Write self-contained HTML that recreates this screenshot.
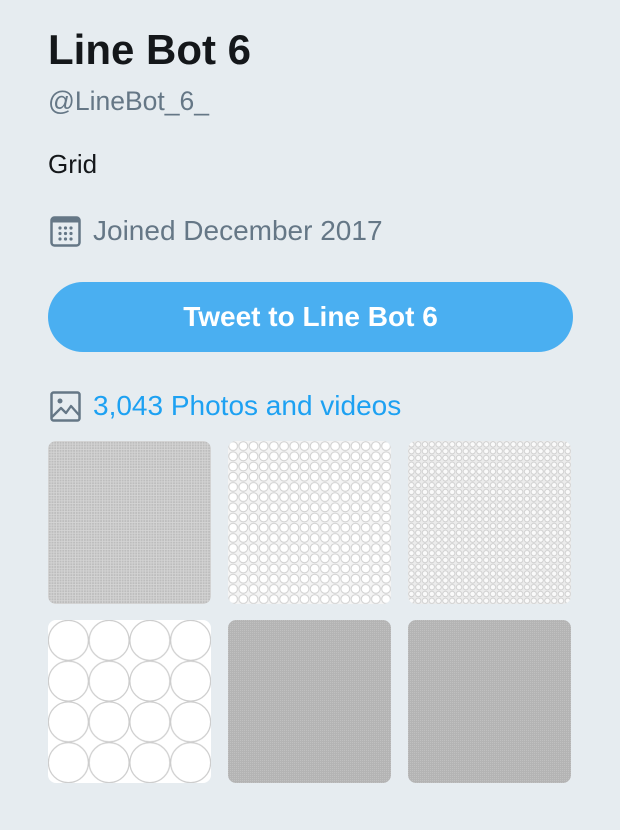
<!DOCTYPE html>
<html><head><meta charset="utf-8"><style>
html,body{margin:0;padding:0;}
body{width:620px;height:830px;background:#e6ecf0;font-family:"Liberation Sans",sans-serif;position:relative;overflow:hidden;}
.a{position:absolute;white-space:nowrap;}
.name{left:48px;top:26px;font-size:42px;font-weight:bold;color:#14171a;line-height:48px;}
.handle{left:48px;top:86px;font-size:26.5px;color:#657786;line-height:30px;}
.bio{left:48px;top:148px;font-size:26px;color:#14171a;line-height:32px;}
.joined{left:93px;top:215px;font-size:28px;color:#657786;line-height:32px;}
.btn{left:48px;top:282px;width:525px;height:70px;border-radius:35px;background:#4aaff1;color:#fff;font-weight:bold;font-size:28px;line-height:70px;text-align:center;}
.photos{left:93px;top:390px;font-size:28px;color:#1da1f2;line-height:32px;}
.t{position:absolute;width:163px;height:163px;border-radius:8px;overflow:hidden;}
</style></head><body>
<div class="a name">Line Bot 6</div>
<div class="a handle">@LineBot_6_</div>
<div class="a bio">Grid</div>
<svg class="a" style="left:50px;top:216px" width="31" height="31" viewBox="0 0 31 31">
<rect x="1.5" y="1.5" width="28" height="28" rx="3" fill="none" stroke="#657786" stroke-width="2.5"/>
<rect x="1.5" y="1.5" width="28" height="5" fill="#657786"/>
<g fill="#657786"><circle cx="10" cy="12" r="1.6"/><circle cx="15.5" cy="12" r="1.6"/><circle cx="21" cy="12" r="1.6"/><circle cx="10" cy="17.5" r="1.6"/><circle cx="15.5" cy="17.5" r="1.6"/><circle cx="21" cy="17.5" r="1.6"/><circle cx="10" cy="23" r="1.6"/><circle cx="15.5" cy="23" r="1.6"/><circle cx="21" cy="23" r="1.6"/></g>
</svg>
<div class="a joined">Joined December 2017</div>
<div class="a btn">Tweet to Line Bot 6</div>
<svg class="a" style="left:50px;top:391px" width="31" height="31" viewBox="0 0 31 31">
<rect x="1.5" y="1.5" width="28" height="28" rx="2" fill="none" stroke="#657786" stroke-width="2.5"/>
<circle cx="10" cy="10" r="2.5" fill="#657786"/>
<path d="M2 26 L11 17 L16 22 L21 15 L29 24" fill="none" stroke="#657786" stroke-width="2.3" stroke-linejoin="round"/>
</svg>
<div class="a photos">3,043 Photos and videos</div>
<svg width="0" height="0" style="position:absolute">
<defs>
<pattern id="g1" width="2.7" height="2.7" patternUnits="userSpaceOnUse"><rect width="2.7" height="2.7" fill="#bdbdbd"/><rect width="0.8" height="2.7" fill="#d6d6d6"/><rect width="2.7" height="0.8" fill="#d6d6d6"/></pattern>
<pattern id="g2" width="2" height="2" patternUnits="userSpaceOnUse"><rect width="2" height="2" fill="#b4b4b4"/><rect width="1" height="1" fill="#c0c0c0"/></pattern>
<pattern id="c1" width="10.2" height="10.2" patternUnits="userSpaceOnUse"><rect width="10.2" height="10.2" fill="#f4f4f4"/><circle cx="5.1" cy="5.1" r="4.4" fill="#fff" stroke="#cfcfcf" stroke-width="1"/></pattern>
<pattern id="c2" width="6.8" height="6.8" patternUnits="userSpaceOnUse"><rect width="6.8" height="6.8" fill="#ececec"/><circle cx="3.4" cy="3.4" r="2.7" fill="#fafafa" stroke="#cacaca" stroke-width="0.8"/></pattern>
<pattern id="c3" width="40.75" height="40.75" patternUnits="userSpaceOnUse"><rect width="40.75" height="40.75" fill="#fff"/><circle cx="20.375" cy="20.375" r="20" fill="#fff" stroke="#cdcdcd" stroke-width="1.2"/></pattern>
</defs></svg>
<svg class="t" style="left:48px;top:441px"><rect width="163" height="163" fill="url(#g1)"/></svg>
<svg class="t" style="left:228px;top:441px"><rect width="163" height="163" fill="url(#c1)"/></svg>
<svg class="t" style="left:408px;top:441px"><rect width="163" height="163" fill="url(#c2)"/></svg>
<svg class="t" style="left:48px;top:620px"><rect width="163" height="163" fill="url(#c3)"/></svg>
<svg class="t" style="left:228px;top:620px"><rect width="163" height="163" fill="url(#g2)"/></svg>
<svg class="t" style="left:408px;top:620px"><rect width="163" height="163" fill="url(#g2)"/></svg>
</body></html>
